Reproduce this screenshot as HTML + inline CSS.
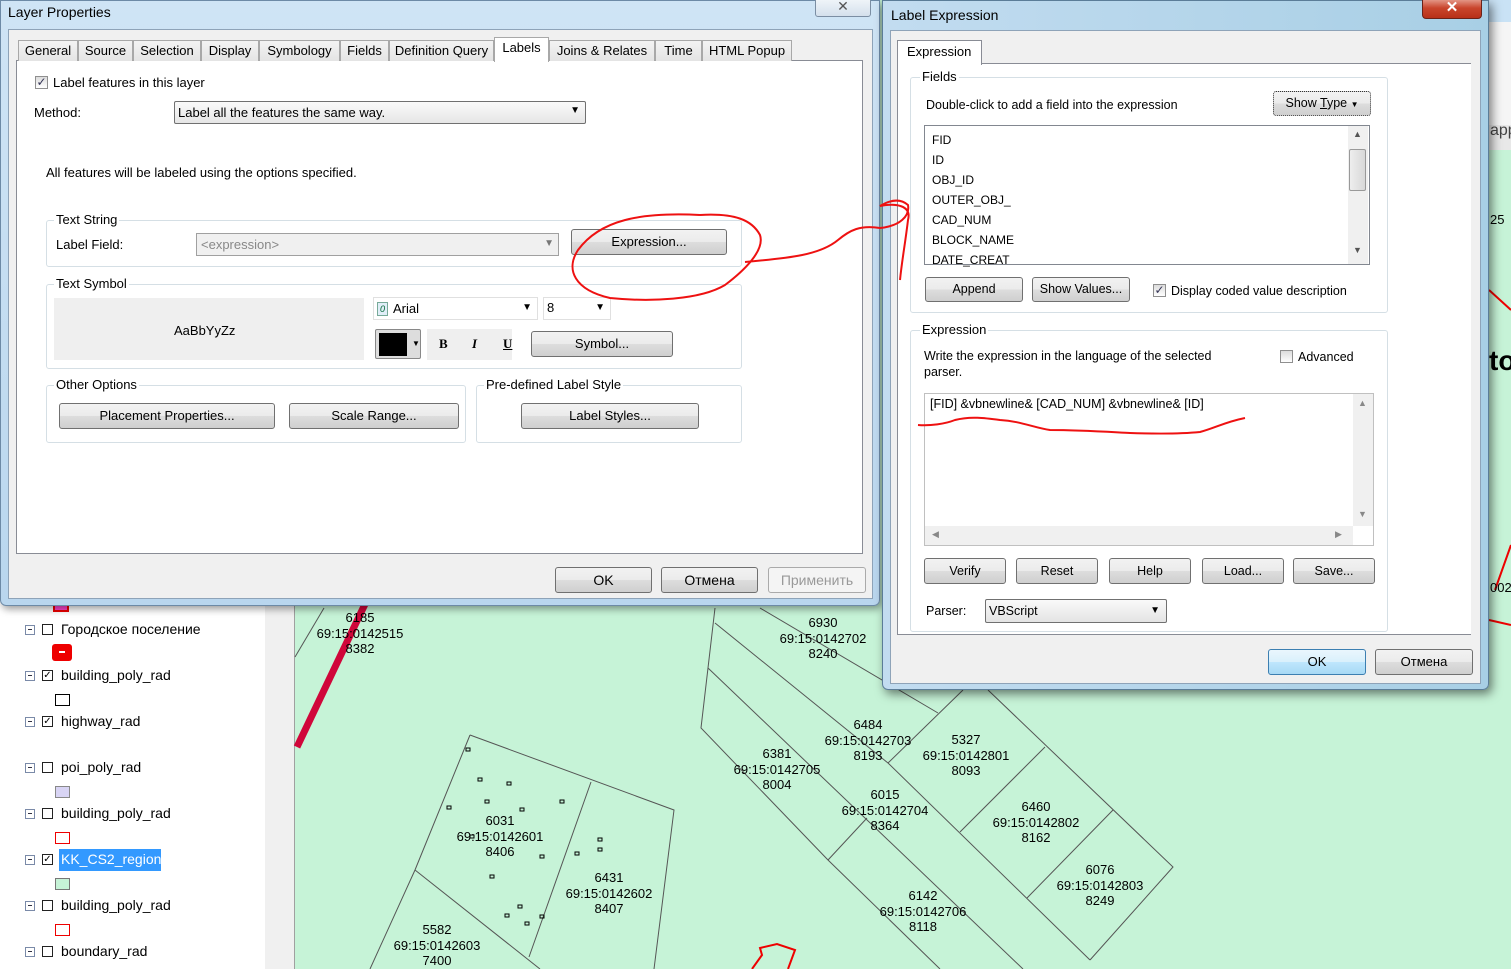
<!DOCTYPE html>
<html><head><meta charset="utf-8"><style>
*{margin:0;padding:0;box-sizing:border-box}
body{width:1511px;height:969px;overflow:hidden;position:relative;background:#c6f3d7;font-family:"Liberation Sans",sans-serif;font-size:13px;color:#000}
.a{position:absolute}
.t{position:absolute;white-space:nowrap}
.btn{position:absolute;border:1px solid #707070;border-radius:3px;background:linear-gradient(#f2f2f2 0%,#ebebeb 50%,#dddddd 51%,#cfcfcf 100%);text-align:center;font-size:13px}
.grp{position:absolute;border:1px solid #d5dfe5;border-radius:3px}
.lg{position:absolute;background:#fff;padding:0 2px;font-size:13px;top:-9px}
.cb{position:absolute;width:13px;height:13px;border:1px solid #8f8f8f;background:linear-gradient(#dcdcdc,#fff)}
.combo{position:absolute;border:1px solid #a0a0a0;background:#fff}
.tab{position:absolute;top:40px;height:21px;border:1px solid #a8a8a8;border-bottom:none;background:linear-gradient(#f3f3f3,#e4e4e4);font-size:13px;padding:2px 0 0 0;text-align:center}
.toc{position:absolute;left:61px;font-size:14px}
.mn{position:absolute;left:25px;width:10px;height:10px;border:1px solid #7a8aa8;background:#fff}
.mn:after{content:"";position:absolute;left:2px;top:3px;width:4px;height:1px;background:#334}
.ck{position:absolute;left:42px;width:11px;height:11px;border:1px solid #222;background:#fff;font-size:10px;line-height:9px;text-align:center}
.ml{position:absolute;font-family:"Liberation Sans Narrow","Liberation Sans",sans-serif;font-size:13px;text-align:center;line-height:15.5px;width:100px}
</style></head><body>

<!-- TOC panel -->
<div class="a" style="left:0;top:600px;width:265px;height:369px;background:#fff"></div>
<div class="a" style="left:265px;top:600px;width:30px;height:369px;background:#f0f0f0;border-right:1px solid #a0a0a0"></div>
<div class="a" style="left:53px;top:602px;width:16px;height:10px;border:2px solid #e00;background:#f4c"></div>
<div class="mn" style="top:625px"></div><div class="ck" style="top:624px"></div><div class="toc" style="top:621px">Городское поселение</div>
<div class="a" style="left:52px;top:644px;width:20px;height:17px;background:#e00;border-radius:3px"><div class="a" style="left:7px;top:7px;width:6px;height:2px;background:#fff"></div></div>
<div class="mn" style="top:671px"></div><div class="ck" style="top:670px">✓</div><div class="toc" style="top:667px">building_poly_rad</div>
<div class="a" style="left:55px;top:694px;width:15px;height:12px;border:1px solid #000;background:#fff"></div>
<div class="mn" style="top:717px"></div><div class="ck" style="top:716px">✓</div><div class="toc" style="top:713px">highway_rad</div>
<div class="mn" style="top:763px"></div><div class="ck" style="top:762px"></div><div class="toc" style="top:759px">poi_poly_rad</div>
<div class="a" style="left:55px;top:786px;width:15px;height:12px;border:1px solid #888;background:#d8d4f4"></div>
<div class="mn" style="top:809px"></div><div class="ck" style="top:808px"></div><div class="toc" style="top:805px">building_poly_rad</div>
<div class="a" style="left:55px;top:832px;width:15px;height:12px;border:1px solid #e00;background:#fff"></div>
<div class="mn" style="top:855px"></div><div class="ck" style="top:854px">✓</div><div class="a" style="left:59px;top:849px;width:102px;height:22px;background:#3399ff"></div><div class="toc" style="top:851px;color:#fff">KK_CS2_region</div>
<div class="a" style="left:55px;top:878px;width:15px;height:12px;border:1px solid #777;background:#c6f3d7"></div>
<div class="mn" style="top:901px"></div><div class="ck" style="top:900px"></div><div class="toc" style="top:897px">building_poly_rad</div>
<div class="a" style="left:55px;top:924px;width:15px;height:12px;border:1px solid #e00;background:#fff"></div>
<div class="mn" style="top:947px"></div><div class="ck" style="top:946px"></div><div class="toc" style="top:943px">boundary_rad</div>

<!-- map -->
<svg class="a" style="left:0;top:0" width="1511" height="969">
<g stroke="#555" stroke-width="1" fill="none">
<path d="M295 657 L324 608"/>
<path d="M470 735 L674 810 L654 969"/>
<path d="M470 735 L415 870 L370 969"/>
<path d="M591 782 L529 957"/>
<path d="M415 870 L540 969"/>
<path d="M715 608 L701 728 L828 860 L940 969"/>
<path d="M715 623 L888 763 L1090 960"/>
<path d="M888 763 L963 690"/>
<path d="M708 668 L1023 969"/>
<path d="M760 608 L938 713"/>
<path d="M988 690 L1173 867 L1090 960"/>
<path d="M1045 747 L960 832"/>
<path d="M1113 810 L1027 898"/>
<path d="M867 818 L828 860"/>
</g>
<path d="M297 747 L366 602" stroke="#d0063a" stroke-width="7"/>
<path d="M752 969 L762 955 L760 948 L777 944 L795 950 L788 969" stroke="#e00" stroke-width="2" fill="none"/>
<path d="M1489 290 L1511 310 M1489 620 L1511 625 M1495 590 L1511 545" stroke="#e00" stroke-width="2"/>
<g fill="none" stroke="#000" stroke-width="1">
<rect x="466" y="748" width="4" height="3"/><rect x="478" y="778" width="4" height="3"/><rect x="507" y="782" width="4" height="3"/><rect x="485" y="800" width="4" height="3"/><rect x="520" y="808" width="4" height="3"/><rect x="447" y="806" width="4" height="3"/><rect x="560" y="800" width="4" height="3"/><rect x="470" y="835" width="4" height="3"/><rect x="540" y="855" width="4" height="3"/><rect x="598" y="838" width="4" height="3"/><rect x="598" y="848" width="4" height="3"/><rect x="575" y="852" width="4" height="3"/><rect x="490" y="875" width="4" height="3"/><rect x="518" y="905" width="4" height="3"/><rect x="540" y="915" width="4" height="3"/><rect x="505" y="914" width="4" height="3"/><rect x="525" y="922" width="4" height="3"/>
</g>
</svg>
<div class="ml" style="left:310px;top:610px">6185<br>69:15:0142515<br>8382</div>
<div class="ml" style="left:450px;top:813px">6031<br>69:15:0142601<br>8406</div>
<div class="ml" style="left:559px;top:870px">6431<br>69:15:0142602<br>8407</div>
<div class="ml" style="left:387px;top:922px">5582<br>69:15:0142603<br>7400</div>
<div class="ml" style="left:773px;top:615px">6930<br>69:15:0142702<br>8240</div>
<div class="ml" style="left:818px;top:717px">6484<br>69:15:0142703<br>8193</div>
<div class="ml" style="left:727px;top:746px">6381<br>69:15:0142705<br>8004</div>
<div class="ml" style="left:916px;top:732px">5327<br>69:15:0142801<br>8093</div>
<div class="ml" style="left:835px;top:787px">6015<br>69:15:0142704<br>8364</div>
<div class="ml" style="left:986px;top:799px">6460<br>69:15:0142802<br>8162</div>
<div class="ml" style="left:1050px;top:862px">6076<br>69:15:0142803<br>8249</div>
<div class="ml" style="left:873px;top:888px">6142<br>69:15:0142706<br>8118</div>

<!-- right strip -->
<div class="a" style="left:1489px;top:0;width:22px;height:22px;background:#c9e2f5"></div>
<div class="a" style="left:1489px;top:22px;width:22px;height:103px;background:#f5f5f5"></div>
<div class="a" style="left:1489px;top:125px;width:22px;height:25px;background:#e8e8e8"></div>
<div class="t" style="left:1490px;top:122px;font-size:16px;color:#444">app</div>
<div class="t" style="left:1489px;top:345px;font-size:28px;font-weight:bold">to</div>
<div class="t" style="left:1490px;top:580px;font-size:13px">002</div>
<div class="t" style="left:1490px;top:212px;font-size:13px">25</div>

<!-- Layer Properties window -->
<div class="a" style="left:0;top:0;width:880px;height:606px;background:linear-gradient(#cfe4f5,#b9d6ee);border:1px solid #6d8aa6;border-radius:0 0 6px 6px;box-shadow:2px 3px 8px rgba(0,0,0,.4)"></div>
<div class="t" style="left:8px;top:4px;font-size:14px">Layer Properties</div>
<div class="a" style="left:815px;top:-4px;width:56px;height:21px;border:1px solid #7b8ea3;border-radius:3px;background:linear-gradient(#f4f8fb,#d4e0ec);text-align:center;color:#555;font-size:14px;line-height:18px">✕</div>
<div class="a" style="left:8px;top:29px;width:865px;height:570px;background:#f0f0f0;border:1px solid #8ea3b8"></div>
<div class="a" style="left:16px;top:60px;width:847px;height:494px;background:#fff;border:1px solid #898c95"></div>
<div class="tab" style="left:18px;width:60px">General</div>
<div class="tab" style="left:78px;width:55px">Source</div>
<div class="tab" style="left:133px;width:68px">Selection</div>
<div class="tab" style="left:201px;width:58px">Display</div>
<div class="tab" style="left:259px;width:81px">Symbology</div>
<div class="tab" style="left:340px;width:49px">Fields</div>
<div class="tab" style="left:389px;width:105px">Definition Query</div>
<div class="tab" style="left:494px;top:37px;width:55px;height:25px;background:#fff">Labels</div>
<div class="tab" style="left:549px;width:106px">Joins &amp; Relates</div>
<div class="tab" style="left:655px;width:47px">Time</div>
<div class="tab" style="left:702px;width:90px">HTML Popup</div>

<div class="cb" style="left:35px;top:76px;color:#335;font-size:12px;line-height:11px;text-align:center">✓</div>
<div class="t" style="left:53px;top:75px">Label features in this layer</div>
<div class="t" style="left:34px;top:105px">Method:</div>
<div class="combo" style="left:174px;top:101px;width:412px;height:23px;background:linear-gradient(#fafafa,#e6e6e6);border-color:#707070;border-radius:2px"><span class="t" style="left:3px;top:3px">Label all the features the same way.</span><span class="t" style="right:5px;top:3px;font-size:10px">▼</span></div>
<div class="t" style="left:46px;top:165px">All features will be labeled using the options specified.</div>

<div class="grp" style="left:46px;top:220px;width:696px;height:47px"><span class="lg" style="left:7px">Text String</span></div>
<div class="t" style="left:56px;top:237px">Label Field:</div>
<div class="combo" style="left:196px;top:233px;width:363px;height:23px;background:#f0f0f0"><span class="t" style="left:4px;top:3px;color:#888">&lt;expression&gt;</span><span class="t" style="right:4px;top:4px;font-size:10px;color:#777">▼</span></div>
<div class="btn" style="left:571px;top:229px;width:156px;height:26px;line-height:24px">Expression...</div>

<div class="grp" style="left:46px;top:284px;width:696px;height:85px"><span class="lg" style="left:7px">Text Symbol</span></div>
<div class="a" style="left:54px;top:298px;width:310px;height:62px;background:#efefef"></div>
<div class="t" style="left:174px;top:323px">AaBbYyZz</div>
<div class="combo" style="left:373px;top:297px;width:165px;height:23px;border-color:#e0e0e0"><span class="a" style="left:3px;top:4px;width:11px;height:14px;border:1px solid #7a9;background:#e0eef8;font-size:9px;font-style:italic;color:#063;text-align:center;line-height:12px">0</span><span class="t" style="left:19px;top:3px">Arial</span><span class="t" style="right:5px;top:4px;font-size:10px">▼</span></div>
<div class="combo" style="left:543px;top:297px;width:68px;height:23px;border-color:#e0e0e0"><span class="t" style="left:3px;top:2px">8</span><span class="t" style="right:5px;top:4px;font-size:10px">▼</span></div>
<div class="a" style="left:375px;top:329px;width:46px;height:30px;border:1px solid #888;border-radius:2px;background:#ddd"><div class="a" style="left:3px;top:3px;width:28px;height:23px;background:#000"></div><span class="t" style="left:36px;top:9px;font-size:8px">▼</span></div>
<div class="a" style="left:427px;top:329px;width:85px;height:31px;background:#efefef"></div>
<div class="t" style="left:439px;top:336px;font-family:'Liberation Serif';font-weight:bold">B</div>
<div class="t" style="left:472px;top:336px;font-family:'Liberation Serif';font-style:italic;font-weight:bold">I</div>
<div class="t" style="left:503px;top:336px;font-family:'Liberation Serif';font-weight:bold;text-decoration:underline">U</div>
<div class="btn" style="left:531px;top:331px;width:142px;height:26px;line-height:24px">Symbol...</div>

<div class="grp" style="left:46px;top:385px;width:420px;height:58px"><span class="lg" style="left:7px">Other Options</span></div>
<div class="btn" style="left:59px;top:403px;width:216px;height:26px;line-height:24px">Placement Properties...</div>
<div class="btn" style="left:289px;top:403px;width:170px;height:26px;line-height:24px">Scale Range...</div>
<div class="grp" style="left:476px;top:385px;width:266px;height:58px"><span class="lg" style="left:7px">Pre-defined Label Style</span></div>
<div class="btn" style="left:521px;top:403px;width:178px;height:26px;line-height:24px">Label Styles...</div>

<div class="btn" style="left:555px;top:567px;width:97px;height:26px;line-height:24px;font-size:14px">OK</div>
<div class="btn" style="left:661px;top:567px;width:97px;height:26px;line-height:24px;font-size:14px">Отмена</div>
<div class="btn" style="left:768px;top:567px;width:98px;height:26px;line-height:24px;font-size:14px;color:#999;border-color:#aaa;background:#f4f4f4">Применить</div>

<!-- Label Expression window -->
<div class="a" style="left:882px;top:0;width:607px;height:690px;background:linear-gradient(90deg,#c2dcf0,#a8cfe5);border:1px solid #5b7d98;border-radius:0 0 6px 6px;box-shadow:3px 4px 10px rgba(0,0,0,.5)"></div>
<div class="t" style="left:891px;top:7px;font-size:14px">Label Expression</div>
<div class="a" style="left:1422px;top:-3px;width:60px;height:22px;border:1px solid #6b2218;border-radius:4px;background:linear-gradient(#e9a99a,#c9452c 50%,#b83018);color:#fff;text-align:center;font-size:15px;font-weight:bold;line-height:20px">✕</div>
<div class="a" style="left:890px;top:30px;width:591px;height:654px;background:#f0f0f0;border:1px solid #8ea3b8"></div>
<div class="a" style="left:897px;top:63px;width:574px;height:572px;background:#fff;border-left:1px solid #898c95;border-top:1px solid #898c95;border-bottom:1px solid #898c95"></div>
<div class="a" style="left:897px;top:40px;width:85px;height:25px;background:#fff;border:1px solid #898c95;border-bottom:none;padding:3px 0 0 9px">Expression</div>

<div class="grp" style="left:910px;top:77px;width:478px;height:236px"><span class="lg" style="left:9px">Fields</span></div>
<div class="t" style="left:926px;top:98px;font-size:12.5px">Double-click to add a field into the expression</div>
<div class="btn" style="left:1273px;top:91px;width:98px;height:25px;line-height:23px;border-color:#333;border-style:dotted;font-size:12.5px">Show <u>T</u>ype&nbsp;<span style="font-size:8px">▼</span></div>
<div class="combo" style="left:924px;top:125px;width:446px;height:140px;border-color:#828790"></div>
<div class="a" style="left:1348px;top:126px;width:20px;height:138px;background:#f0f0f0"><div class="a" style="left:1px;top:23px;width:17px;height:42px;border:1px solid #999;border-radius:2px;background:linear-gradient(90deg,#eee,#d8d8d8)"></div><span class="t" style="left:5px;top:3px;font-size:9px;color:#555">▲</span><span class="t" style="left:5px;top:119px;font-size:9px;color:#555">▼</span></div>
<div class="t" style="left:932px;top:130px;font-size:12px;line-height:20px">FID<br>ID<br>OBJ_ID<br>OUTER_OBJ_<br>CAD_NUM<br>BLOCK_NAME<br>DATE_CREAT</div>
<div class="btn" style="left:925px;top:277px;width:98px;height:25px;line-height:23px;font-size:12.5px">Append</div>
<div class="btn" style="left:1032px;top:277px;width:98px;height:25px;line-height:23px;font-size:12.5px">Show Values...</div>
<div class="cb" style="left:1153px;top:284px;color:#335;font-size:12px;line-height:11px;text-align:center">✓</div>
<div class="t" style="left:1171px;top:284px;font-size:12.5px">Display coded value description</div>

<div class="grp" style="left:910px;top:330px;width:478px;height:302px"><span class="lg" style="left:9px">Expression</span></div>
<div class="t" style="left:924px;top:348px;font-size:12.5px;line-height:16px">Write the expression in the language of the selected<br>parser.</div>
<div class="cb" style="left:1280px;top:350px"></div>
<div class="t" style="left:1298px;top:350px;font-size:12.5px">Advanced</div>
<div class="combo" style="left:924px;top:393px;width:450px;height:153px;border-color:#c0c0c0"></div>
<div class="a" style="left:1353px;top:394px;width:20px;height:132px;background:#f0f0f0"><span class="t" style="left:5px;top:4px;font-size:9px;color:#888">▲</span><span class="t" style="left:5px;top:115px;font-size:9px;color:#888">▼</span></div>
<div class="a" style="left:925px;top:526px;width:428px;height:19px;background:#f0f0f0"><span class="t" style="left:7px;top:3px;font-size:9px;color:#888">◀</span><span class="t" style="left:410px;top:3px;font-size:9px;color:#888">▶</span></div>
<div class="t" style="left:930px;top:397px;font-size:12.5px">[FID] &amp;vbnewline&amp; [CAD_NUM] &amp;vbnewline&amp; [ID]</div>
<div class="btn" style="left:924px;top:558px;width:82px;height:26px;line-height:24px;font-size:12.5px">Verify</div>
<div class="btn" style="left:1016px;top:558px;width:82px;height:26px;line-height:24px;font-size:12.5px">Reset</div>
<div class="btn" style="left:1109px;top:558px;width:82px;height:26px;line-height:24px;font-size:12.5px">Help</div>
<div class="btn" style="left:1202px;top:558px;width:82px;height:26px;line-height:24px;font-size:12.5px">Load...</div>
<div class="btn" style="left:1293px;top:558px;width:82px;height:26px;line-height:24px;font-size:12.5px">Save...</div>
<div class="t" style="left:926px;top:604px;font-size:12.5px">Parser:</div>
<div class="combo" style="left:985px;top:599px;width:182px;height:24px;background:linear-gradient(#fafafa,#e4e4e4);border-color:#707070;border-radius:2px"><span class="t" style="left:3px;top:4px;font-size:12.5px">VBScript</span><span class="t" style="right:6px;top:5px;font-size:10px">▼</span></div>
<div class="btn" style="left:1268px;top:649px;width:98px;height:26px;line-height:24px;font-size:13px;border-color:#3c7fb1;background:linear-gradient(#eaf6fd,#d9f0fc 50%,#bee6fd 51%,#a7d9f5)">OK</div>
<div class="btn" style="left:1375px;top:649px;width:98px;height:26px;line-height:24px;font-size:13px">Отмена</div>

<!-- red annotations -->
<svg class="a" style="left:0;top:0" width="1511" height="969">
<g stroke="#ee1111" stroke-width="2" fill="none">
<path d="M700 215 C640 212 600 220 578 250 C565 270 575 290 610 298 C650 302 700 300 725 285 C745 270 765 250 760 235 C752 220 735 213 700 215"/>
<path d="M745 262 C790 258 820 255 838 240 C850 230 860 225 880 228 C900 226 910 216 908 205 C900 198 890 200 880 206 C895 203 912 205 908 220 C905 245 902 260 900 280"/>
<path d="M918 425 C930 426 945 424 955 420 C970 416 985 418 1000 420 C1020 421 1035 428 1050 430 C1080 430 1110 432 1130 433 C1160 434 1180 434 1200 432 C1215 428 1225 422 1245 418"/>
</g>
</svg>
</body></html>
